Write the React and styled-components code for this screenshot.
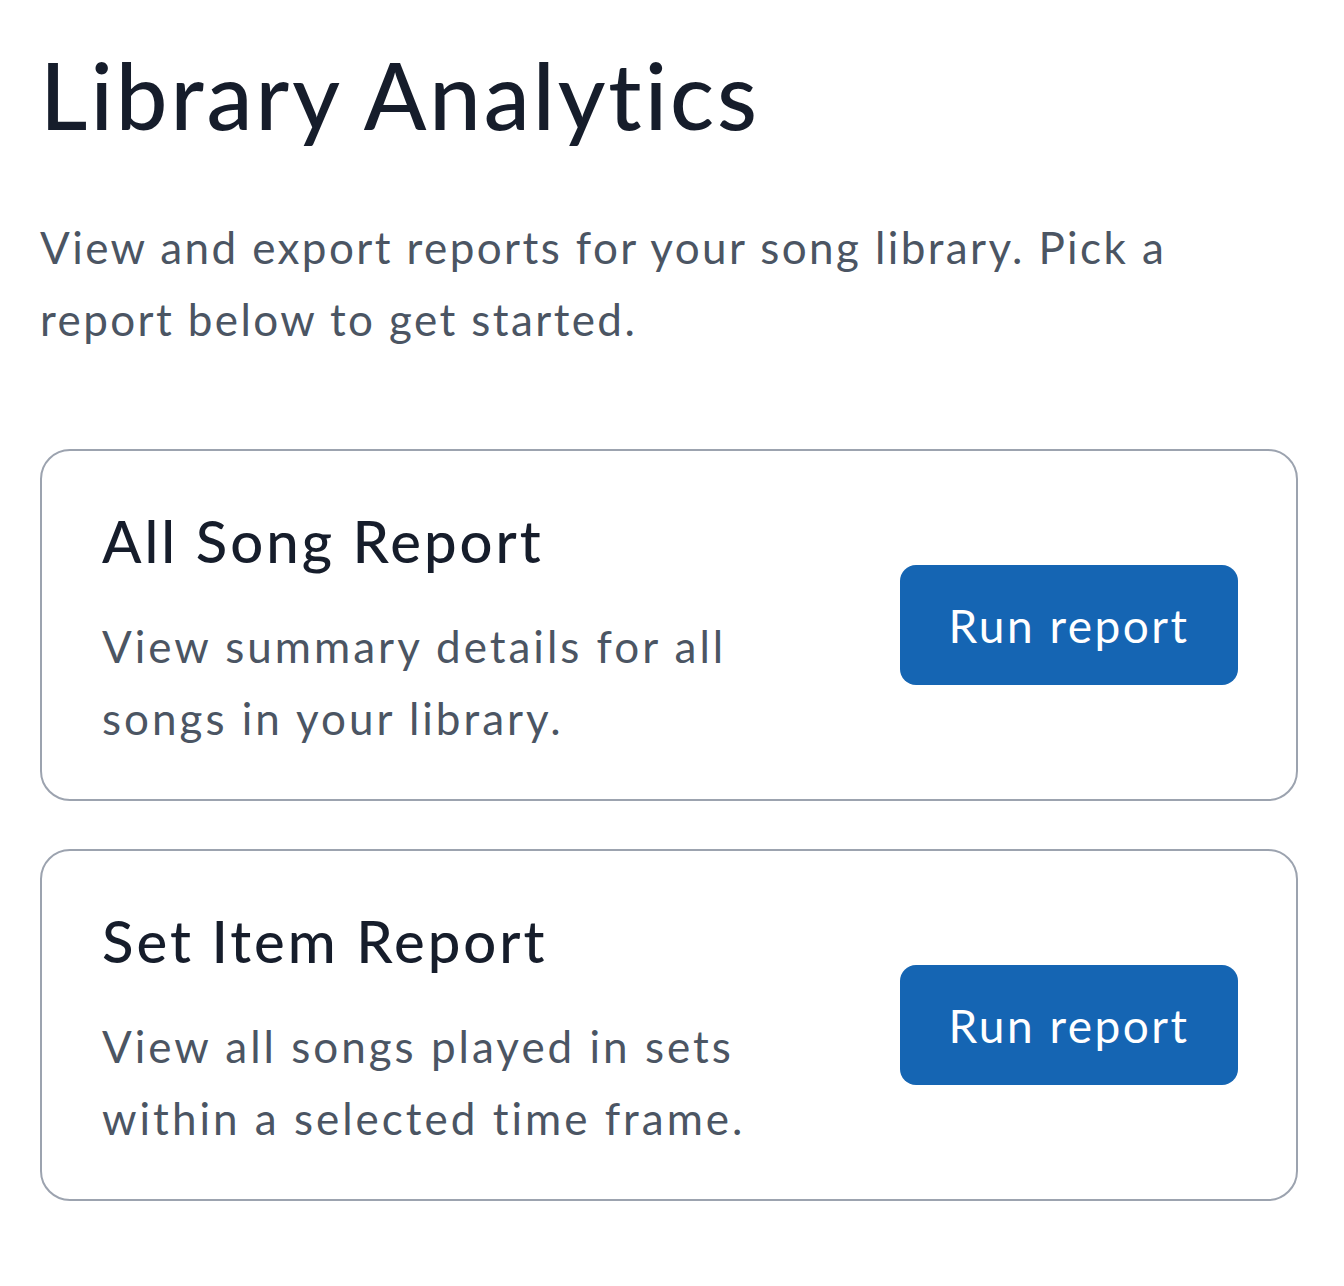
import React from 'react';
import styled, { createGlobalStyle } from 'styled-components';

const GlobalStyle = createGlobalStyle`
  body {
    margin: 0;
    background: #ffffff;
    font-family: 'Lato', 'Noto Sans', sans-serif;
  }
`;

const Page = styled.main`
  padding: 40px 46px 40px 40px;
  display: flex;
  flex-direction: column;
`;

const Title = styled.h1`
  margin: 0;
  font-size: 92px;
  line-height: 110px;
  font-weight: 500;
  color: #161d2b;
  letter-spacing: 3px;
`;

const Intro = styled.p`
  margin: 61px 0 0;
  font-size: 44px;
  line-height: 72px;
  color: #4b5563;
  letter-spacing: 2.4px;
  max-width: 1200px;
`;

const ReportList = styled.div`
  display: flex;
  flex-direction: column;
  gap: 48px;
  margin-top: 94px;
`;

const Card = styled.section`
  display: flex;
  align-items: center;
  justify-content: space-between;
  height: 352px;
  box-sizing: border-box;
  padding: 0 58px 0 60px;
  border: 2px solid #9ca3af;
  border-radius: 30px;
`;

const CardText = styled.div`
  width: 680px;
  padding-top: 10px;
`;

const CardTitle = styled.h2`
  margin: 0;
  font-size: 58px;
  line-height: 70px;
  font-weight: 500;
  color: #161d2b;
  letter-spacing: 3px;
`;

const CardDesc = styled.p`
  margin: 34px 0 0;
  font-size: 44px;
  line-height: 72px;
  color: #4b5563;
  letter-spacing: 3px;
`;

const RunButton = styled.button`
  width: 338px;
  height: 120px;
  border: none;
  border-radius: 16px;
  background: #1565b3;
  color: #ffffff;
  font-family: inherit;
  font-size: 46px;
  letter-spacing: 2.5px;
  cursor: pointer;
  &:hover {
    background: #0f5599;
  }
`;

const reports = [
  {
    title: 'All Song Report',
    desc: 'View summary details for all songs in your library.',
  },
  {
    title: 'Set Item Report',
    desc: 'View all songs played in sets within a selected time frame.',
  },
];

const App = () => (
  <>
    <GlobalStyle />
    <Page>
      <Title>Library Analytics</Title>
      <Intro>
        View and export reports for your song library. Pick a report below to get started.
      </Intro>
      <ReportList>
        {reports.map((r) => (
          <Card key={r.title}>
            <CardText>
              <CardTitle>{r.title}</CardTitle>
              <CardDesc>{r.desc}</CardDesc>
            </CardText>
            <RunButton>Run report</RunButton>
          </Card>
        ))}
      </ReportList>
    </Page>
  </>
);

export default App;
